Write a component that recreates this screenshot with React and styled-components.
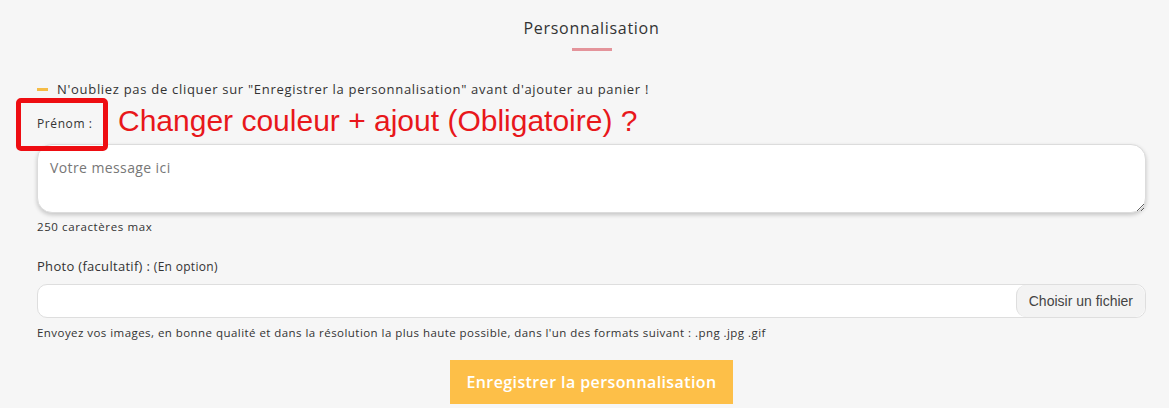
import React from "react";
import styled, { createGlobalStyle } from "styled-components";

const Global = createGlobalStyle`
  html, body { margin: 0; padding: 0; background: #f6f6f6; }
  body { font-family: "Open Sans", "Noto Sans", sans-serif; color: #333; }
`;

const Page = styled.div`
  width: 1169px;
  height: 408px;
  box-sizing: border-box;
  padding: 0 23px 0 37px;
  display: flex;
  flex-direction: column;
  overflow: hidden;
`;

const Header = styled.div`
  display: flex;
  flex-direction: column;
  align-items: center;
  padding-top: 18px;
`;

const Title = styled.h2`
  margin: 0;
  font-size: 16px;
  font-weight: 400;
  color: #333;
  line-height: 20px;
  letter-spacing: 0.7px;
`;

const TitleBar = styled.span`
  display: block;
  width: 40px;
  height: 3px;
  margin-top: 10px;
  background: #e4949b;
`;

const Notice = styled.p`
  margin: 30px 0 0;
  display: flex;
  align-items: center;
  gap: 9px;
  font-size: 13px;
  line-height: 16px;
  color: #333;
  letter-spacing: 0.7px;
`;

const Dash = styled.span`
  width: 11px;
  height: 3px;
  background: #f5bc46;
  flex: none;
`;

const LabelRow = styled.div`
  position: relative;
  display: flex;
  align-items: center;
  height: 40px;
  margin-top: 1px;
`;

const Label = styled.label`
  font-size: 12px;
  color: #333;
  padding-top: 10px;
  width: 81px;
  letter-spacing: 0.6px;
`;

const Annotation = styled.span`
  font-family: "Liberation Sans", Arial, sans-serif;
  font-size: 30px;
  color: #e8171b;
  line-height: 34px;
  padding-top: 6px;
`;

const RedBox = styled.span`
  position: absolute;
  left: -21px;
  top: 0;
  width: 82px;
  height: 43px;
  border: 5px solid #ee0d12;
  border-radius: 5px;
  pointer-events: none;
`;

const Message = styled.textarea`
  display: block;
  box-sizing: border-box;
  width: 100%;
  height: 69px;
  margin-top: 6px;
  padding: 13px 12px;
  border: 1px solid #dcdcdc;
  border-radius: 15px;
  background: #fff;
  box-shadow: 0 2px 4px rgba(0, 0, 0, 0.2);
  font-family: "Open Sans", "Noto Sans", sans-serif;
  font-size: 14px;
  letter-spacing: 0.4px;
  color: #333;
  resize: vertical;
  outline: none;
  &::placeholder { color: #777; }
`;

const Small = styled.div`
  font-size: 11.5px;
  color: #333;
  margin-top: ${(p) => p.$top || 0}px;
  line-height: 14px;
  letter-spacing: ${(p) => p.$spacing || 0}px;
`;

const PhotoLabel = styled.div`
  margin-top: 24px;
  font-size: 13px;
  color: #333;
  line-height: 16px;
  letter-spacing: 0.3px;
  span { font-size: 12px; }
`;

const FileField = styled.div`
  margin-top: 9px;
  height: 34px;
  box-sizing: border-box;
  border: 1px solid #dedede;
  border-radius: 10px;
  background: #fff;
  display: flex;
  justify-content: flex-end;
  overflow: hidden;
`;

const FileButton = styled.button`
  height: 100%;
  padding: 0 12px;
  border: none;
  border-left: 1px solid #dedede;
  border-radius: 10px;
  background: #f3f3f3;
  font-family: "Liberation Sans", Arial, sans-serif;
  font-size: 14px;
  color: #444;
`;

const Footer = styled.div`
  display: flex;
  justify-content: center;
  margin-top: 20px;
`;

const Save = styled.button`
  width: 283px;
  height: 44px;
  border: none;
  background: #fdbf48;
  color: #fff;
  font-family: "Open Sans", "Noto Sans", sans-serif;
  font-size: 16px;
  font-weight: 600;
  letter-spacing: 0.4px;
`;

export default function App() {
  return (
    <>
      <Global />
      <Page>
        <Header>
          <Title>Personnalisation</Title>
          <TitleBar />
        </Header>
        <Notice>
          <Dash />
          N'oubliez pas de cliquer sur "Enregistrer la personnalisation" avant d'ajouter au panier !
        </Notice>
        <LabelRow>
          <Label>Prénom :</Label>
          <Annotation>Changer couleur + ajout (Obligatoire) ?</Annotation>
          <RedBox />
        </LabelRow>
        <Message placeholder="Votre message ici" />
        <Small $top={7} $spacing={0.6}>250 caractères max</Small>
        <PhotoLabel>
          Photo (facultatif) : <span>(En option)</span>
        </PhotoLabel>
        <FileField>
          <FileButton>Choisir un fichier</FileButton>
        </FileField>
        <Small $top={8} $spacing={0.45}>
          Envoyez vos images, en bonne qualité et dans la résolution la plus haute possible, dans l'un des formats suivant : .png .jpg .gif
        </Small>
        <Footer>
          <Save>Enregistrer la personnalisation</Save>
        </Footer>
      </Page>
    </>
  );
}
